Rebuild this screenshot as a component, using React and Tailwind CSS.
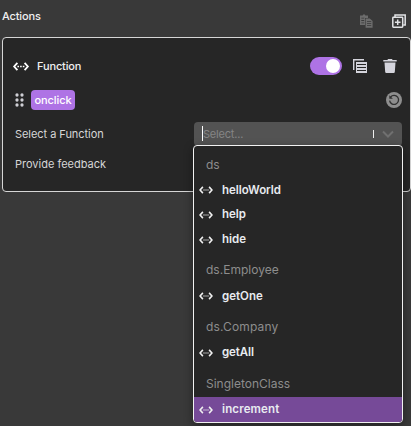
import React from 'react';

function CodeArrows({ className, dotted = false }) {
  return (
    <svg className={className} viewBox="0 0 18 10" fill="none" stroke="currentColor" strokeWidth="2">
      <path d="M5 1 1.4 5 5 9M13 1l3.6 4L13 9" />
      <path d="M5 5h8" strokeWidth="1.5" strokeDasharray={dotted ? '1.8 1.2' : undefined} opacity={dotted ? 1 : 0.65} />
    </svg>
  );
}

function PasteIcon() {
  return (
    <svg className="h-[14px] w-[13px] text-[#6c6c6c]" viewBox="0 0 13 14" fill="currentColor">
      <path d="M0 1.5h2.5L4 0l1.5 1.5H8V4H5v7H0zM1.3 3.8v.8h2.9v-.8zm0 2.3v.8h2.9v-.8zm0 2.3v.8h2.9v-.8z" fillRule="evenodd" />
      <path d="M5.6 4.4h4.2L12.6 7v6.7h-7zM7 7.3v.8h4.2v-.8zm0 2v.8h4.2v-.8zm0 2v.8h4.2v-.8z" fillRule="evenodd" />
    </svg>
  );
}

function AddCopyIcon() {
  return (
    <svg className="h-[14px] w-[14px] text-[#e2e3e6]" viewBox="0 0 14 14" fill="none" stroke="currentColor" strokeWidth="1.5">
      <rect x=".8" y="3.3" width="9.9" height="9.9" rx=".6" />
      <path d="M3 2.9V.9h10.2v10h-2M5.7 5.4v5.6M2.9 8.2h5.6" />
    </svg>
  );
}

function CopyIcon() {
  return (
    <svg className="h-[14px] w-[14px] text-[#d4d4dc]" viewBox="0 0 14 14" fill="currentColor">
      <path d="M0 0h11v1.4H1.4V11H0z" />
      <path d="M3 3h11v11H3zM4 5v1h9V5zm0 3v1h9V8zm0 3v1h9v-1z" fillRule="evenodd" />
    </svg>
  );
}

function TrashIcon() {
  return (
    <svg className="h-[14px] w-[14px] text-[#d4d4dc]" viewBox="0 0 14 14" fill="currentColor">
      <path d="M.3 1h4l.8-1h3.8l.8 1h4v1.5H.3zM1.5 3.6h11l-.7 9.4q-.1 1-1.1 1H3.3q-1 0-1.1-1z" />
    </svg>
  );
}

function ResetIcon() {
  return (
    <svg className="h-4 w-4" viewBox="0 0 16 16" fill="none">
      <circle cx="8" cy="8" r="8" fill="#8e8e8e" />
      <path d="M4.6 5A4.5 4.5 0 1 1 3.6 8.6" stroke="#303030" strokeWidth="1.3" />
      <path d="M3.3 3.2v3.6h3.6z" fill="#303030" />
    </svg>
  );
}

function GripIcon() {
  return (
    <svg className="h-[14px] w-[9px]" viewBox="0 0 9 14" fill="#cfcfd4">
      {[2, 7, 12].map((y) => (
        <g key={y}>
          <circle cx="2" cy={y} r="1.65" />
          <circle cx="7" cy={y} r="1.65" />
        </g>
      ))}
    </svg>
  );
}

const groups = [
  { name: 'ds', track: '', items: [['helloWorld', 'tracking-[-0.05px]'], ['help', ''], ['hide', '']] },
  { name: 'ds.Employee', track: 'tracking-[0.02px]', items: [['getOne', '']] },
  { name: 'ds.Company', track: 'tracking-[0.15px]', items: [['getAll', 'tracking-[-0.1px]']] },
  { name: 'SingletonClass', track: 'tracking-[0px]', items: [['increment', 'tracking-[0.15px]']] },
];

function FunctionMenu() {
  return (
    <div className="absolute left-[193px] top-[145px] h-[278px] w-[210px] overflow-hidden rounded-[4px] border border-[#f1f1f1] bg-[#262626] shadow-[0_3px_10px_rgba(0,0,0,0.4)]">
      {groups.map((group) => (
        <div key={group.name}>
          <div className="flex h-8 items-center pl-3 pt-[5px] text-[12px] text-[#8d8d8d]">
            <span className={group.track}>{group.name}</span>
          </div>
          {group.items.map(([label, track]) => (
            <div
              key={label}
              className={`flex h-[24.66px] items-center gap-[9px] pl-[5px] text-[11.5px] font-semibold text-[#e8ebf0] ${label === 'increment' ? 'bg-[#764a98]' : ''}`}
            >
              <CodeArrows className="h-2 w-[14px] text-[#f0f0f0]" />
              <span className={`-mt-px ${track}`}>{label}</span>
            </div>
          ))}
        </div>
      ))}
    </div>
  );
}

export default function App() {
  return (
    <div className="relative h-[426px] w-[411px] overflow-hidden bg-[#393939] font-[Inter,'Open_Sans',sans-serif] text-[11px] leading-4 text-[#d6d6d6]">
      <header className="flex h-[37px] justify-between pl-[2px] pr-[5px]">
        <span className="pt-[8px] font-medium tracking-[-0.15px] text-[#f0f0f0]">Actions</span>
        <div className="flex gap-[19px] pt-[14px]">
          <PasteIcon />
          <AddCopyIcon />
        </div>
      </header>
      <section className="ml-[2px] h-[155px] w-[409px] rounded-[4px] border border-[#d6d6d6] bg-[#262626] pl-[12px] pr-[8px] pt-[18px]">
        <div className="flex h-5 items-center">
          <CodeArrows dotted className="-ml-[3px] h-[9px] w-[18px] text-white" />
          <span className="-mt-px ml-[7px] font-medium tracking-[-0.15px] text-[#f0f0f0]">Function</span>
          <div className="ml-auto flex h-[18px] w-8 items-center justify-end rounded-full bg-[#ae73e5] pr-[2px]">
            <div className="h-[14px] w-[14px] rounded-full bg-white" />
          </div>
          <div className="ml-[11px] flex gap-4 pr-[5px]">
            <CopyIcon />
            <TrashIcon />
          </div>
        </div>
        <div className="mt-[14px] flex h-5 items-center">
          <GripIcon />
          <span className="ml-[7px] flex h-5 w-11 items-center justify-center rounded-[4px] bg-[#ae73e5] pb-px text-[11px] font-medium tracking-[-0.1px] text-white">onclick</span>
          <div className="ml-auto">
            <ResetIcon />
          </div>
        </div>
        <div className="mt-3 flex h-6 items-center justify-between">
          <span className="-mt-px tracking-[-0.05px]">Select a Function</span>
          <div className="flex h-6 w-[208px] items-center rounded-[4px] bg-[#535353] pl-2 pr-[8px] text-[#858585]">
            <div className="-mt-px h-[15px] w-px bg-white" />
            <span className="-mt-px tracking-[-0.2px]">Select...</span>
            <div className="ml-auto h-2 w-px bg-[#eeeeee]" />
            <svg className="ml-[8px] h-[8px] w-[12px]" viewBox="0 0 12 8" fill="none" stroke="#707070" strokeWidth="2">
              <path d="m1 1.5 5 5 5-5" />
            </svg>
          </div>
        </div>
        <div className="mt-[10px]">Provide feedback</div>
      </section>
      <FunctionMenu />
    </div>
  );
}
